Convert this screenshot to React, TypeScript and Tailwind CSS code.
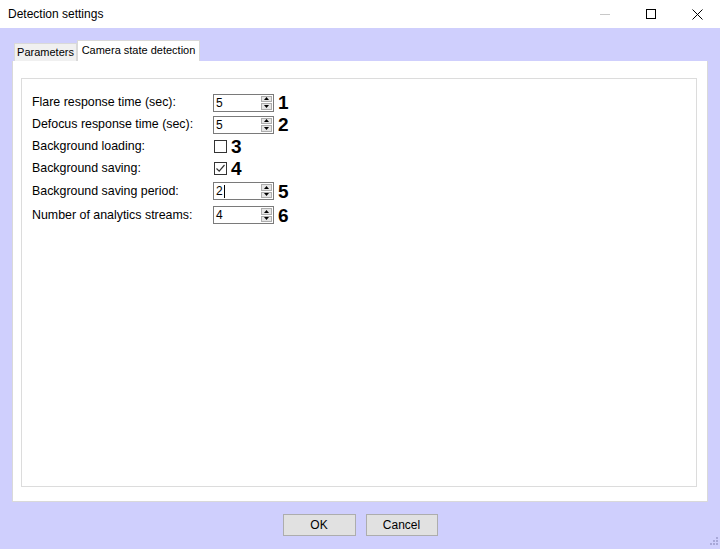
import React from 'react';

const font = { fontFamily: '"Liberation Sans", Arial, sans-serif' };

function Spinner({ value, caret }: { value: string; caret?: boolean }) {
  return (
    <div className="flex h-[18px] w-[61px] border border-[#7a7a7a] bg-white">
      <div className="flex flex-1 items-center pl-[2px] text-[12px] leading-none text-black">
        {value}
        {caret && <span className="ml-[1px] inline-block h-[13px] w-[1px] bg-black" />}
      </div>
      <div className="flex w-[12px] flex-col gap-[1px] py-[1px] pr-[1px]">
        <div className="flex flex-1 items-center justify-center border border-[#adadad] bg-[#e5e5e5]">
          <svg width="5" height="3" viewBox="0 0 5 3">
            <path d="M2.5 0 L5 3 L0 3 Z" fill="#000" />
          </svg>
        </div>
        <div className="flex flex-1 items-center justify-center border border-[#adadad] bg-[#e5e5e5]">
          <svg width="5" height="3" viewBox="0 0 5 3">
            <path d="M0 0 L5 0 L2.5 3 Z" fill="#000" />
          </svg>
        </div>
      </div>
    </div>
  );
}

function Check({ checked }: { checked?: boolean }) {
  return (
    <div className="ml-[1px] flex h-[13px] w-[13px] items-center justify-center border border-[#333] bg-white">
      {checked && (
        <svg width="11" height="11" viewBox="0 0 11 11">
          <path d="M1.5 5.5 L4.2 8.2 L9.5 2" stroke="#333" strokeWidth="1.2" fill="none" />
        </svg>
      )}
    </div>
  );
}

function Row({ label, h, n, children }: { label: string; h: string; n: string; children: React.ReactNode }) {
  return (
    <div className={`flex items-center ${h}`}>
      <div className="w-[191px] shrink-0 pl-[10px] text-[12.4px] text-black">{label}</div>
      {children}
      <span className="ml-[4px] text-[19px] font-bold leading-none text-black">{n}</span>
    </div>
  );
}

export default function App() {
  return (
    <div className="flex h-[549px] w-[720px] flex-col bg-[#cfcffd]" style={font}>
      {/* title bar */}
      <div className="flex h-[28px] items-center bg-white">
        <span className="pl-[8px] text-[12px] text-black">Detection settings</span>
        <div className="ml-auto flex items-center">
          <div className="flex h-[28px] w-[46px] items-center justify-center">
            <div className="h-[1px] w-[10px] bg-[#c8c8c8]" />
          </div>
          <div className="flex h-[28px] w-[46px] items-center justify-center">
            <div className="h-[10px] w-[10px] border border-black" />
          </div>
          <div className="flex h-[28px] w-[46px] items-center justify-center">
            <svg width="11" height="11" viewBox="0 0 11 11">
              <path d="M0.5 0.5 L10.5 10.5 M10.5 0.5 L0.5 10.5" stroke="#000" strokeWidth="1" />
            </svg>
          </div>
        </div>
      </div>

      {/* tabs */}
      <div className="flex flex-col px-[12px] pt-[12px]">
        <div className="flex h-[21px] items-end pl-[2px]">
          <div className="flex h-[18px] w-[63px] items-center justify-center border border-b-0 border-[#d9d9d9] bg-[#f0f0f0] text-[11px] text-black">
            Parameters
          </div>
          <div className="flex h-[21px] w-[123px] items-center justify-center border border-b-0 border-[#d9d9d9] bg-white pb-[2px] text-[11px] text-black">
            Camera state detection
          </div>
        </div>
        <div className="flex h-[441px] flex-col border border-t-0 border-[#d9d9d9] bg-white pl-[8px] pr-[10px] pt-[17px] pb-[14px]">
          <div className="flex flex-1 flex-col border border-[#dcdcdc] pt-[12px]">
            <Row label="Flare response time (sec):" h="h-[23px]" n="1">
              <Spinner value="5" />
            </Row>
            <Row label="Defocus response time (sec):" h="h-[21px]" n="2">
              <Spinner value="5" />
            </Row>
            <Row label="Background loading:" h="h-[22px]" n="3">
              <Check />
            </Row>
            <Row label="Background saving:" h="h-[22px]" n="4">
              <Check checked />
            </Row>
            <Row label="Background saving period:" h="h-[24px]" n="5">
              <Spinner value="2" caret />
            </Row>
            <Row label="Number of analytics streams:" h="h-[24px]" n="6">
              <Spinner value="4" />
            </Row>
          </div>
        </div>
      </div>

      {/* buttons */}
      <div className="flex justify-center gap-[10px] pt-[12px]">
        <button className="h-[22px] w-[73px] border border-[#adadad] bg-[#e1e1e1] text-[12px] text-black">OK</button>
        <button className="h-[22px] w-[72px] border border-[#adadad] bg-[#e1e1e1] text-[12px] text-black">Cancel</button>
      </div>
      <div className="mt-auto flex justify-end pb-[2px] pr-[2px]">
        <svg width="10" height="10" viewBox="0 0 10 10">
          <g fill="#a8a8d8">
            <rect x="8" y="0" width="2" height="2" />
            <rect x="5" y="3" width="2" height="2" />
            <rect x="8" y="3" width="2" height="2" />
            <rect x="2" y="6" width="2" height="2" />
            <rect x="5" y="6" width="2" height="2" />
            <rect x="8" y="6" width="2" height="2" />
          </g>
        </svg>
      </div>
    </div>
  );
}
